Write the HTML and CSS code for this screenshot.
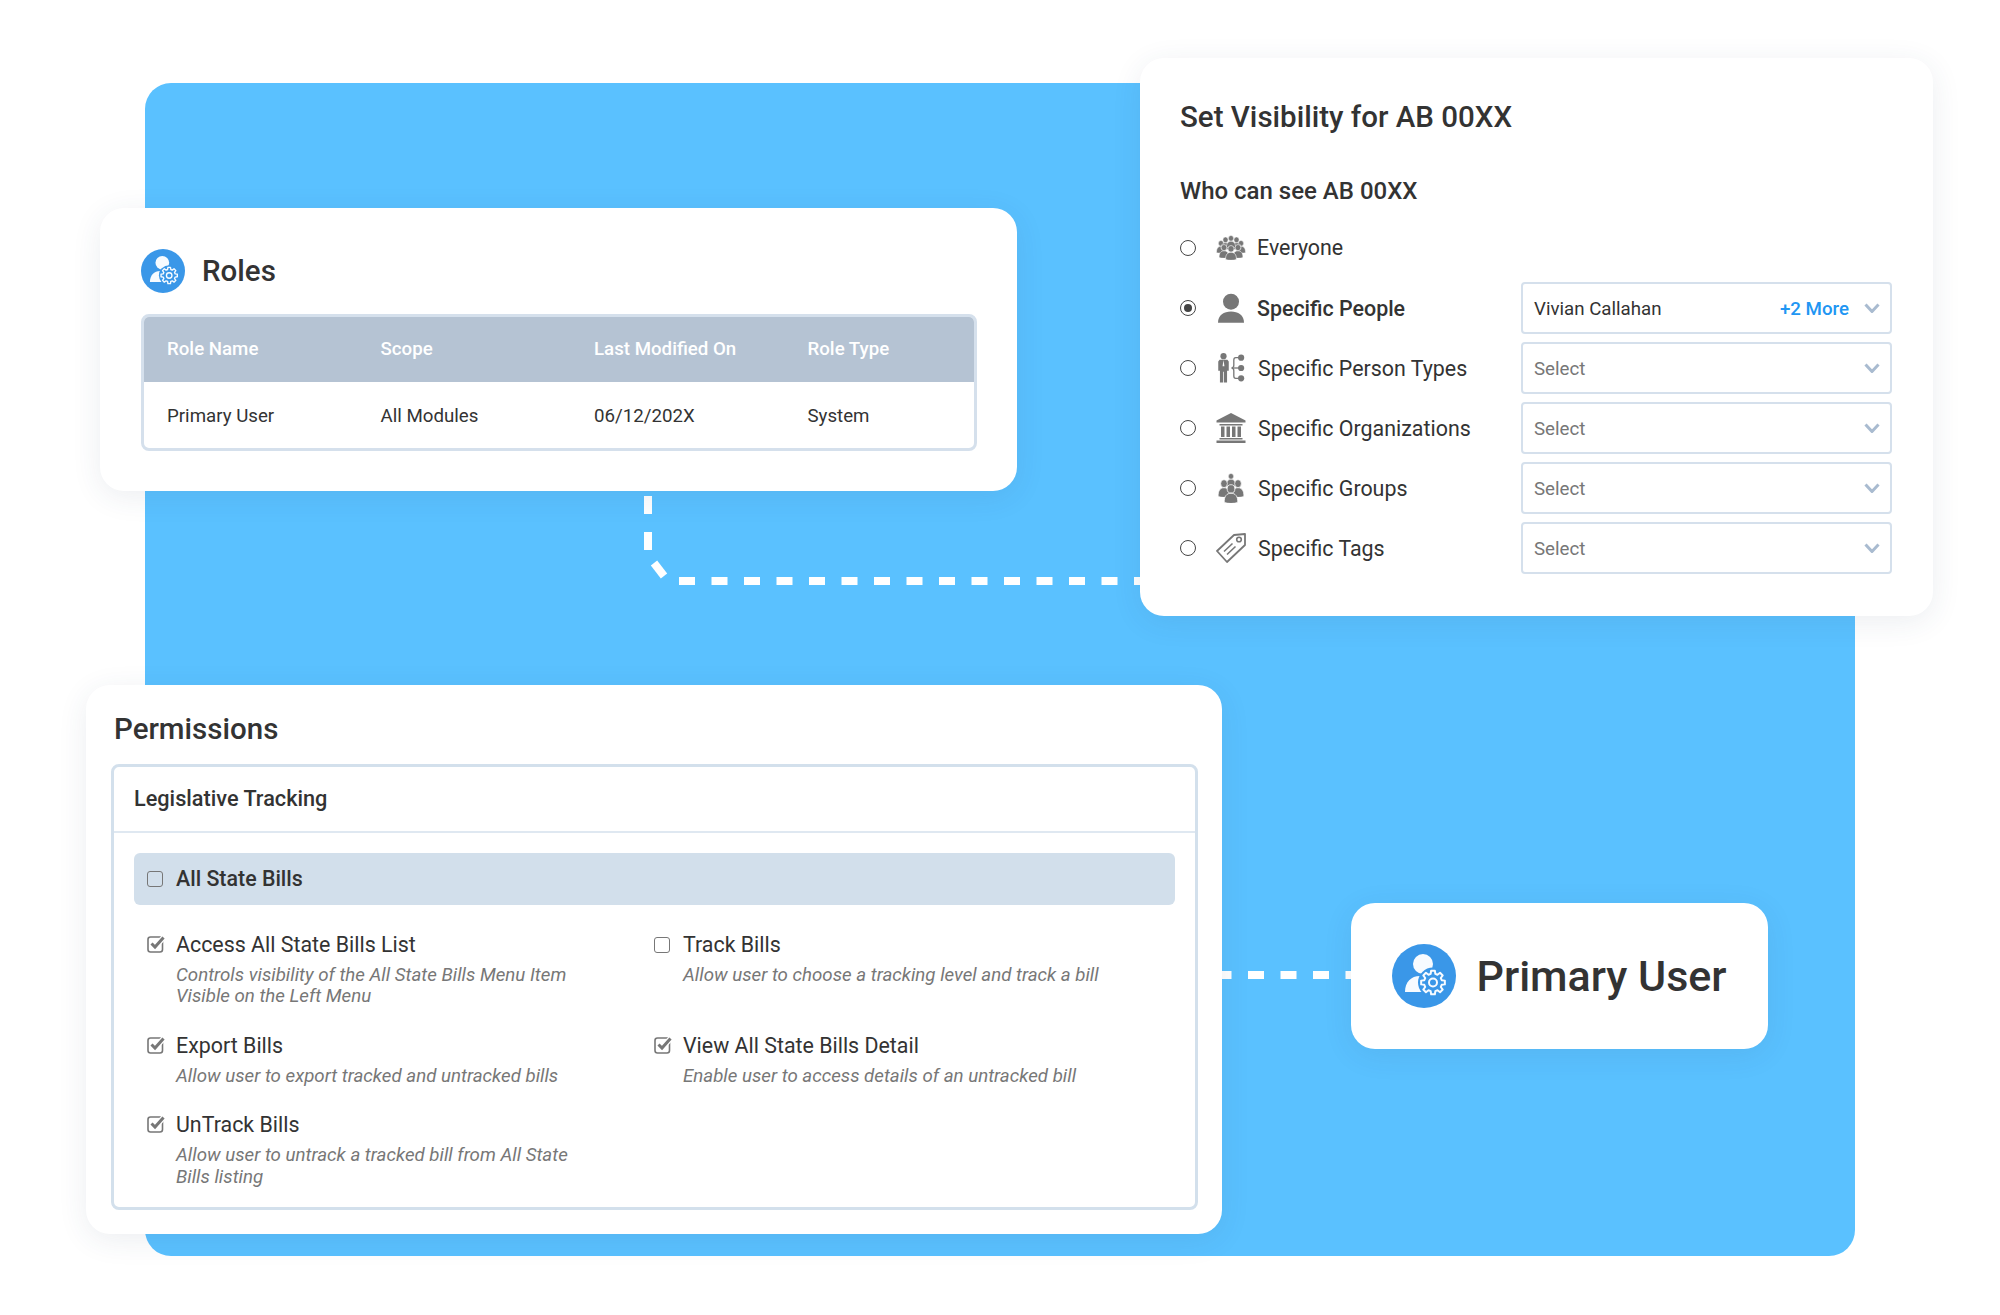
FILE: index.html
```html
<!DOCTYPE html>
<html>
<head>
    <title>Roles and Permissions</title>
    <link rel="stylesheet" href="styles.css">
</head>
<body>
    <svg class="icon-defs" aria-hidden="true">
        <defs>
            <symbol id="user-gear" viewBox="0 0 64 64">
                <circle cx="32" cy="32" r="32" fill="#3a97e8"/>
                <circle cx="31" cy="20" r="10" fill="#f7fbff"/>
                <path d="M13 48C13 38 19 32 28 32L38 33V48Z" fill="#f7fbff"/>
                <g transform="translate(41 38.5)">
                    <circle r="15" fill="#3a97e8"/>
                    <polygon fill="#3a97e8" stroke="#f7fbff" stroke-width="2" stroke-linejoin="round" points="8.69,-2.33 11.85,-1.88 11.85,1.88 8.69,2.33 7.79,4.5 9.71,7.05 7.05,9.71 4.5,7.79 2.33,8.69 1.88,11.85 -1.88,11.85 -2.33,8.69 -4.5,7.79 -7.05,9.71 -9.71,7.05 -7.79,4.5 -8.69,2.33 -11.85,1.88 -11.85,-1.88 -8.69,-2.33 -7.79,-4.5 -9.71,-7.05 -7.05,-9.71 -4.5,-7.79 -2.33,-8.69 -1.88,-11.85 1.88,-11.85 2.33,-8.69 4.5,-7.79 7.05,-9.71 9.71,-7.05 7.79,-4.5"/>
                    <circle r="4" fill="none" stroke="#f7fbff" stroke-width="2"/>
                </g>
            </symbol>
            <symbol id="mini-person" viewBox="0 0 12 14" preserveAspectRatio="none">
                <circle cx="6" cy="3.6" r="3.1" fill="#777" stroke="#fff" stroke-width=".6"/>
                <path d="M.6 13.6C.4 9 2.6 6.8 6 6.8S11.6 9 11.4 13.6C8 14.6 4 14.6.6 13.6Z" fill="#777" stroke="#fff" stroke-width=".6"/>
            </symbol>
            <symbol id="check-box" viewBox="0 0 18 18">
                <rect x="1" y="2" width="14.5" height="15" rx="2.5" fill="none" stroke="#777" stroke-width="1.6"/>
                <path d="M4.5 8.5L8 12L16.5 2.5" fill="none" stroke="#fff" stroke-width="5.5"/>
                <path d="M4.5 8.5L8 12L16.5 2.5" fill="none" stroke="#777" stroke-width="3"/>
            </symbol>
        </defs>
    </svg>

    <div class="canvas">
        <div class="panel"></div>

        <svg class="connectors" width="2000" height="1315" aria-hidden="true">
            <path class="link link-v" d="M648 496V550"/>
            <path class="link" d="M654 563L664 576"/>
            <path class="link link-h" d="M679 581H1141"/>
            <path class="link link-h" d="M1215.500 975H1352"/>
        </svg>

        <section class="card roles-card">
            <div class="roles-head">
                <svg class="role-icon"><use href="#user-gear"/></svg>
                <h2 class="card-title">Roles</h2>
            </div>
            <div class="table-wrap">
                <table class="roles-table">
                    <colgroup>
                        <col class="role-col">
                        <col class="role-col">
                        <col class="role-col">
                        <col>
                    </colgroup>
                    <thead>
                        <tr>
                            <th>Role Name</th>
                            <th>Scope</th>
                            <th>Last Modified On</th>
                            <th>Role Type</th>
                        </tr>
                    </thead>
                    <tbody>
                        <tr>
                            <td>Primary User</td>
                            <td>All Modules</td>
                            <td>06/12/202X</td>
                            <td>System</td>
                        </tr>
                    </tbody>
                </table>
            </div>
        </section>

        <section class="card visibility-card">
            <h2 class="card-title">Set Visibility for AB 00XX</h2>
            <h3 class="sub-title">Who can see AB 00XX</h3>

            <div class="vis-row">
                <span class="radio"></span>
                <svg class="vis-icon" viewBox="0 0 30 30">
                    <use href="#mini-person" x="0" y="7" width="10" height="13"/>
                    <use href="#mini-person" x="20" y="7" width="10" height="13"/>
                    <use href="#mini-person" x="4.500" y="3.500" width="10" height="13"/>
                    <use href="#mini-person" x="15.500" y="3.500" width="10" height="13"/>
                    <use href="#mini-person" x="10" y="2" width="10" height="13"/>
                    <use href="#mini-person" x="2.500" y="11" width="11" height="14"/>
                    <use href="#mini-person" x="16.500" y="11" width="11" height="14"/>
                    <use href="#mini-person" x="9" y="12" width="12" height="15"/>
                </svg>
                <span class="vis-label is-tight">Everyone</span>
            </div>

            <div class="vis-row">
                <span class="radio is-on"></span>
                <svg class="vis-icon" viewBox="0 0 30 30">
                    <circle cx="15" cy="8.700" r="8" fill="#777"/>
                    <path d="M2 29.700C2 22 8 18.500 15 18.500S28 22 28 29.700Z" fill="#777"/>
                </svg>
                <span class="vis-label is-strong">Specific People</span>
                <div class="select">
                    <span class="select-value">Vivian Callahan</span>
                    <span class="select-more">+2 More</span>
                    <svg class="chevron" viewBox="0 0 16 10"><path d="M1.500 1.500L8 8.500L14.500 1.500"/></svg>
                </div>
            </div>

            <div class="vis-row">
                <span class="radio"></span>
                <svg class="vis-icon" viewBox="0 0 30 32">
                    <circle cx="7" cy="3.400" r="3.300" fill="#777"/>
                    <path d="M2.800 7.200H11.200L12.600 9V19H10.800V31.500H7.400V20H6.600V31.500H3.200V19H1.400V9Z" fill="#777"/>
                    <path d="M7 7.500L8 14H6Z" fill="#fff"/>
                    <path d="M24 5H20C18.500 5 18 6 18 7.500V13C18 15 17 16 15.500 16C17 16 18 17 18 19V24.500C18 26 18.500 27 20 27H24" fill="none" stroke="#777" stroke-width="1.400"/>
                    <circle cx="25.800" cy="5" r="3.300" fill="#777"/>
                    <circle cx="25.800" cy="16" r="3.300" fill="#777"/>
                    <circle cx="25.800" cy="27" r="3.300" fill="#777"/>
                    <path d="M18 16H24" stroke="#777" stroke-width="1.400"/>
                </svg>
                <span class="vis-label">Specific Person Types</span>
                <div class="select">
                    <span class="select-value is-empty">Select</span>
                    <svg class="chevron" viewBox="0 0 16 10"><path d="M1.500 1.500L8 8.500L14.500 1.500"/></svg>
                </div>
            </div>

            <div class="vis-row">
                <span class="radio"></span>
                <svg class="vis-icon" viewBox="0 0 30 30">
                    <path d="M15 0L29.500 7.500V9.500H.5V7.500Z" fill="#777"/>
                    <path d="M3.500 11H26.500V12.500H3.500ZM5 13.500H8.500V24H5ZM10.500 13.500H14V24H10.500ZM16 13.500H19.500V24H16ZM21.500 13.500H25V24H21.500ZM3.500 25H26.500V26.500H3.500ZM.5 27.500H29.500V30H.5Z" fill="#777"/>
                </svg>
                <span class="vis-label">Specific Organizations</span>
                <div class="select">
                    <span class="select-value is-empty">Select</span>
                    <svg class="chevron" viewBox="0 0 16 10"><path d="M1.500 1.500L8 8.500L14.500 1.500"/></svg>
                </div>
            </div>

            <div class="vis-row">
                <span class="radio"></span>
                <svg class="vis-icon" viewBox="0 0 30 30">
                    <use href="#mini-person" x="10" y="0" width="10" height="13"/>
                    <use href="#mini-person" x="1.500" y="6" width="13" height="18"/>
                    <use href="#mini-person" x="15.500" y="6" width="13" height="18"/>
                    <use href="#mini-person" x="7.500" y="11" width="15" height="19"/>
                </svg>
                <span class="vis-label">Specific Groups</span>
                <div class="select">
                    <span class="select-value is-empty">Select</span>
                    <svg class="chevron" viewBox="0 0 16 10"><path d="M1.500 1.500L8 8.500L14.500 1.500"/></svg>
                </div>
            </div>

            <div class="vis-row">
                <span class="radio"></span>
                <svg class="vis-icon" viewBox="0 0 30 30">
                    <path d="M18 2L29 1V12L11 29L1 18Z" fill="none" stroke="#777" stroke-width="1.800" stroke-linejoin="round"/>
                    <circle cx="23" cy="6.500" r="2.300" fill="none" stroke="#777" stroke-width="1.600"/>
                    <path d="M8 18.500L16.500 10.500M11 21.500L19.500 13.500" stroke="#777" stroke-width="1.600"/>
                </svg>
                <span class="vis-label">Specific Tags</span>
                <div class="select">
                    <span class="select-value is-empty">Select</span>
                    <svg class="chevron" viewBox="0 0 16 10"><path d="M1.500 1.500L8 8.500L14.500 1.500"/></svg>
                </div>
            </div>
        </section>

        <section class="card permissions-card">
            <h2 class="card-title perm-title">Permissions</h2>
            <div class="perm-box">
                <div class="perm-head">Legislative Tracking</div>
                <div class="perm-body">
                    <div class="perm-bar">
                        <span class="box"></span>
                        <span class="perm-bar-label">All State Bills</span>
                    </div>
                    <div class="perm-grid">
                        <div class="perm-item">
                            <svg class="box-on"><use href="#check-box"/></svg>
                            <div>
                                <div class="perm-name">Access All State Bills List</div>
                                <p class="perm-desc">Controls visibility of the All State Bills Menu Item Visible on the Left Menu</p>
                            </div>
                        </div>
                        <div class="perm-item">
                            <span class="box"></span>
                            <div>
                                <div class="perm-name">Track Bills</div>
                                <p class="perm-desc">Allow user to choose a tracking level and track a bill</p>
                            </div>
                        </div>
                        <div class="perm-item">
                            <svg class="box-on"><use href="#check-box"/></svg>
                            <div>
                                <div class="perm-name">Export Bills</div>
                                <p class="perm-desc">Allow user to export tracked and untracked bills</p>
                            </div>
                        </div>
                        <div class="perm-item">
                            <svg class="box-on"><use href="#check-box"/></svg>
                            <div>
                                <div class="perm-name">View All State Bills Detail</div>
                                <p class="perm-desc">Enable user to access details of an untracked bill</p>
                            </div>
                        </div>
                        <div class="perm-item">
                            <svg class="box-on"><use href="#check-box"/></svg>
                            <div>
                                <div class="perm-name">UnTrack Bills</div>
                                <p class="perm-desc">Allow user to untrack a tracked bill from All State Bills listing</p>
                            </div>
                        </div>
                    </div>
                </div>
            </div>
        </section>

        <section class="card primary-card">
            <svg class="primary-icon"><use href="#user-gear"/></svg>
            <span class="primary-name">Primary User</span>
        </section>
    </div>
</body>
</html>
```

FILE: styles.css
```css
html, body { margin: 0; padding: 0; background: #fff; }
body { font-family: Roboto, "Liberation Sans", sans-serif; color: #333; }
h2, h3, p { margin: 0; }
.icon-defs { position: absolute; width: 0; height: 0; }

.canvas { position: relative; width: 2000px; height: 1315px; overflow: hidden; }
.panel {
    position: absolute;
    left: 145px;
    top: 83px;
    width: 1710px;
    height: 1173px;
    background: #5ac1ff;
    border-radius: 26px;
}
.connectors { position: absolute; left: 0; top: 0; }
.link { fill: none; stroke: #fff; stroke-width: 8; }
.link-v { stroke-dasharray: 18 18; }
.link-h { stroke-dasharray: 16 16.500; }

.card {
    position: absolute;
    background: #fff;
    border-radius: 24px;
    box-shadow: 0 6px 30px rgba(40, 70, 100, 0.09);
    box-sizing: border-box;
}
.card-title { font-size: 29.500px; line-height: 40px; font-weight: 500; }

/* roles */
.roles-card { left: 100px; top: 208px; width: 917px; height: 283px; padding: 41px 40px 0 41px; }
.roles-head { display: flex; align-items: center; gap: 17px; height: 44px; margin-bottom: 21px; }
.role-icon { width: 44px; height: 44px; }
.table-wrap { border: 3px solid #d5e0ec; border-radius: 8px; overflow: hidden; }
.roles-table { width: 100%; border-collapse: collapse; table-layout: fixed; font-size: 18.700px; }
.role-col { width: 213.500px; }
.roles-table th {
    background: #b5c3d3;
    color: #fff;
    font-weight: 500;
    text-align: left;
    height: 65px;
    padding: 0 0 2px 23px;
    box-sizing: border-box;
}
.roles-table td { height: 66px; padding: 2px 0 0 23px; box-sizing: border-box; }

/* visibility */
.visibility-card { left: 1140px; top: 58px; width: 793px; padding: 39px 41px 42px 40px; }
.sub-title { font-size: 24px; line-height: 30px; font-weight: 500; margin: 39px 0 16px; }
.vis-row { display: flex; align-items: center; height: 52px; margin-bottom: 8px; }
.vis-row:last-child { margin-bottom: 0; }
.radio {
    width: 16px;
    height: 16px;
    box-sizing: border-box;
    border: 1.800px solid #444;
    border-radius: 50%;
    margin-right: 20px;
    display: flex;
    align-items: center;
    justify-content: center;
    flex: none;
}
.radio.is-on::after { content: ""; width: 8px; height: 8px; border-radius: 50%; background: #444; }
.vis-icon { width: 30px; height: 30px; margin-right: 12px; flex: none; }
.vis-label { font-size: 21.400px; flex: 1; }
.vis-label.is-strong { font-weight: 500; margin-left: -1px; }
.vis-label.is-tight { margin: -2px 0 0 -1px; }
.select {
    display: flex;
    align-items: center;
    width: 371px;
    height: 52px;
    box-sizing: border-box;
    border: 2px solid #d5e0ec;
    border-radius: 4px;
    padding: 0 10px 0 11px;
    font-size: 18.700px;
}
.select-value, .select-more { padding-top: 1px; }
.select-value { flex: 1; }
.select-value.is-empty { color: #777; }
.select-more { color: #2196f3; font-weight: 500; margin-right: 15px; }
.chevron { width: 16px; height: 10px; fill: none; stroke: #a9bbd0; stroke-width: 3; }

/* permissions */
.permissions-card { left: 86px; top: 685px; width: 1136px; height: 549px; padding: 24px 24px 24px 25px; }
.perm-title { padding-left: 3px; }
.perm-box { margin-top: 15px; border: 3px solid #d3e0ec; border-radius: 8px; height: 446px; box-sizing: border-box; }
.perm-head {
    height: 64px;
    line-height: 64px;
    padding-left: 20px;
    font-size: 21.700px;
    font-weight: 500;
    border-bottom: 2px solid #dfe8f1;
}
.perm-body { padding: 20px 20px 19px 20px; }
.perm-bar {
    display: flex;
    align-items: center;
    gap: 13px;
    height: 52px;
    padding-left: 13px;
    background: #d2dfeb;
    border-radius: 6px;
}
.perm-bar-label { font-size: 21.400px; font-weight: 500; margin-top: -1px; }
.box {
    width: 16px;
    height: 16px;
    box-sizing: border-box;
    border: 1.800px solid #777;
    border-radius: 3px;
    flex: none;
}
.perm-item .box { margin-top: 5px; }
.box-on { width: 18px; height: 18px; flex: none; margin: 3px -2px 0 0; }
.perm-grid {
    display: grid;
    grid-template-columns: 507px 1fr;
    row-gap: 25px;
    margin-top: 26.500px;
    padding-left: 13px;
}
.perm-item { display: flex; gap: 13px; }
.perm-name { font-size: 21.400px; line-height: 26px; }
.perm-desc {
    font-size: 18.700px;
    line-height: 21.500px;
    font-style: italic;
    color: #777;
    margin-top: 7px;
    max-width: 425px;
}

/* primary user */
.primary-card {
    left: 1351px;
    top: 903px;
    width: 417px;
    height: 146px;
    display: flex;
    align-items: center;
    gap: 20.500px;
    padding-left: 41px;
}
.primary-icon { width: 64px; height: 64px; flex: none; }
.primary-name { font-size: 43px; font-weight: 500; }
```
